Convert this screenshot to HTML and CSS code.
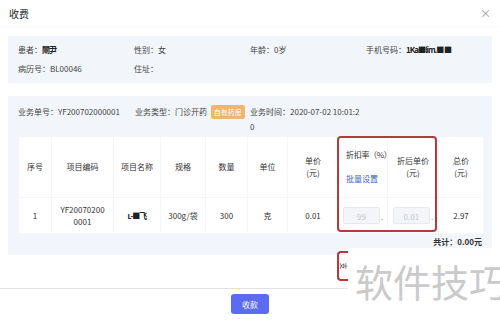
FILE: index.html
```html
<!DOCTYPE html>
<html lang="zh-CN">
<head>
    <meta charset="UTF-8">
    <meta name="viewport" content="width=device-width, initial-scale=1.0">
    <title>收费</title>
    <link rel="stylesheet" href="styles.css">
</head>
<body>
    <div class="modal">
        <div class="modal-head">
            <span class="modal-title">收费</span>
            <span class="modal-close">×</span>
        </div>

        <div class="panel patient">
            <div>患者：<span class="scribble">閘尹</span></div>
            <div>性别：女</div>
            <div>年龄：0岁</div>
            <div>手机号码：<span class="scribble">1Ka■lim.■ ■</span></div>
            <div>病历号：BL00046</div>
            <div>住址：</div>
        </div>

        <div class="panel order">
            <div class="order-info">
                <div>业务单号：YF200702000001</div>
                <div>业务类型：门诊开药 <span class="tag">自有药房</span></div>
                <div class="order-time">业务时间：2020-07-02 10:01:20</div>
            </div>

            <div class="table-wrap">
                <table class="items">
                    <colgroup>
                        <col style="width:33px">
                        <col style="width:62px">
                        <col style="width:47px">
                        <col style="width:45px">
                        <col style="width:42px">
                        <col style="width:40px">
                        <col style="width:51px">
                        <col style="width:49px">
                        <col style="width:51px">
                        <col style="width:45px">
                    </colgroup>
                    <thead>
                        <tr>
                            <th>序号</th>
                            <th>项目编码</th>
                            <th>项目名称</th>
                            <th>规格</th>
                            <th>数量</th>
                            <th>单位</th>
                            <th>单价<br>(元)</th>
                            <th class="discount">
                                <div class="clip">折扣率（%）</div>
                                <a class="batch">批量设置</a>
                            </th>
                            <th>折后单价<br>(元)</th>
                            <th>总价<br>(元)</th>
                        </tr>
                    </thead>
                    <tbody>
                        <tr>
                            <td>1</td>
                            <td class="code">YF200702000001</td>
                            <td><span class="scribble">ʟ-■飞</span></td>
                            <td>300g/袋</td>
                            <td>300</td>
                            <td>克</td>
                            <td>0.01</td>
                            <td class="input-cell"><span class="field">99</span><span class="dot">.</span></td>
                            <td class="input-cell"><span class="field">0.01</span><span class="dot">.</span></td>
                            <td>2.97</td>
                        </tr>
                    </tbody>
                </table>
                <div class="mark mark-cols"></div>
            </div>

            <div class="total">共计：0.00元</div>
        </div>

        <div class="modal-foot">
            <button class="btn-primary">收款</button>
        </div>
    </div>

    <div class="mark mark-pay"><span>支</span></div>
    <div class="watermark">软件技巧</div>
</body>
</html>
```

FILE: styles.css
```css
body {
    margin: 0;
    background: #fff;
    font-family: "Noto Sans CJK SC", "Noto Sans", sans-serif;
    font-size: 8px;
    color: #333;
    width: 500px;
    height: 322px;
    overflow: hidden;
    position: relative;
}
.modal-head {
    height: 26px;
    display: flex;
    align-items: center;
    justify-content: space-between;
    padding: 0 9px 0 9px;
    box-shadow: 0 1px 2px rgba(0,0,0,0.03);
}
.modal-title {
    font-size: 10px;
    color: #222;
}
.modal-close {
    font-size: 11px;
    color: #999;
}
.panel {
    background: #f2f5f9;
    margin: 0 8px;
}
.patient {
    margin-top: 10px;
    padding: 7px 10px;
    display: grid;
    grid-template-columns: repeat(4, 1fr);
    row-gap: 5px;
    line-height: 14px;
    color: #444;
}
.scribble {
    font-weight: bold;
    letter-spacing: -1px;
    color: #222;
}
.order {
    margin-top: 13px;
    padding: 8px 9px 6px 10px;
}
.order-info {
    display: grid;
    grid-template-columns: 117px 115px 1fr 117px;
    line-height: 15px;
    color: #444;
}
.order-time {
    grid-column: 3 / 4;
    width: 113px;
    word-break: break-all;
}
.tag {
    display: inline-block;
    background: #f2b46f;
    color: #fff;
    font-size: 7px;
    line-height: 14px;
    padding: 0 3px;
    border-radius: 2px;
    margin-left: 2px;
}
.table-wrap {
    position: relative;
    margin-top: 2px;
}
.items {
    width: 465px;
    table-layout: fixed;
    border-collapse: collapse;
    background: #fff;
}
.items th,
.items td {
    border: 1px solid #f4f6f8;
    text-align: center;
    font-weight: normal;
    line-height: 12px;
    padding: 0 4px;
    color: #333;
}
.items th {
    height: 60px;
}
.items td {
    height: 35px;
}
.items td.code {
    word-break: break-all;
    padding: 0 8px;
}
.items th.discount {
    text-align: left;
    padding-left: 7px;
    padding-right: 0;
}
.clip {
    white-space: nowrap;
    overflow: hidden;
    letter-spacing: -0.3px;
}
.batch {
    display: block;
    margin-top: 12px;
    color: #3c5fc8;
}
.input-cell {
    white-space: nowrap;
}
.field {
    display: inline-block;
    width: 37px;
    height: 17px;
    line-height: 17px;
    background: #f3f5f8;
    border: 1px solid #e6e9ee;
    border-radius: 2px;
    color: #c3c7cf;
    box-sizing: border-box;
}
.dot {
    color: #999;
    margin-left: 1px;
}
.mark {
    position: absolute;
    border: 2px solid #b53b3b;
    border-radius: 4px;
}
.mark-cols {
    left: 319px;
    top: 0;
    width: 96px;
    height: 92px;
}
.total {
    text-align: right;
    padding-right: 1px;
    line-height: 14px;
    margin-top: 1px;
    font-weight: bold;
    color: #333;
}
.modal-foot {
    margin-top: 33px;
    border-top: 1px solid #e2e2e2;
    padding-top: 5px;
    display: flex;
    justify-content: center;
}
.btn-primary {
    background: #5b6cf0;
    color: #fff;
    border: none;
    border-radius: 3px;
    font-family: inherit;
    font-size: 8px;
    width: 38px;
    height: 20px;
    padding: 0;
}
.mark-pay {
    left: 337px;
    top: 251px;
    width: 10px;
    height: 26px;
    border-right: none;
    border-radius: 4px 0 0 4px;
}
.mark-pay span {
    position: absolute;
    left: 1px;
    top: 8px;
    font-size: 7px;
    transform: rotate(90deg);
}
.watermark {
    position: absolute;
    left: 348px;
    top: 248px;
    width: 152px;
    height: 56px;
    background: rgba(255,255,255,0.9);
    color: #cacaca;
    font-size: 38px;
    line-height: 38px;
    padding: 14px 0 0 7px;
    box-sizing: border-box;
    white-space: nowrap;
}
```
